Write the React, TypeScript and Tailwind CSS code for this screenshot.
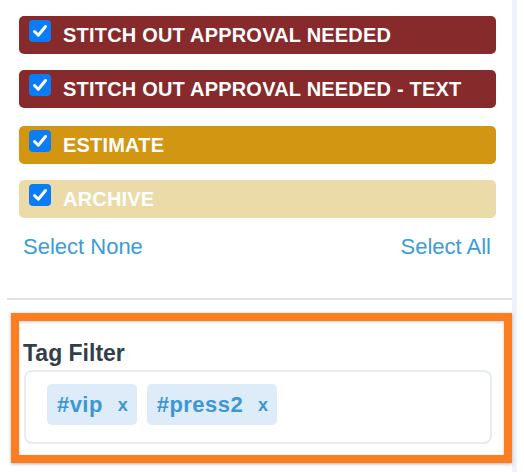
import React from 'react'

const statuses = [
  { label: 'STITCH OUT APPROVAL NEEDED', bg: 'bg-[#862a2b]', gap: 'mt-0' },
  { label: 'STITCH OUT APPROVAL NEEDED - TEXT', bg: 'bg-[#862a2b]', gap: 'mt-[16px]' },
  { label: 'ESTIMATE', bg: 'bg-[#d39613]', gap: 'mt-[18px]' },
  { label: 'ARCHIVE', bg: 'bg-[#ebdba8]', gap: 'mt-[16px]' },
]

const tags = ['#vip', '#press2']

function CheckBox() {
  return (
    <span className="mt-[4px] flex h-[22px] w-[22px] shrink-0 items-center justify-center self-start rounded-[4px] bg-[#0a7cf5]">
      <svg width="22" height="22" viewBox="0 0 22 22" fill="none">
        <path d="M5.5 11.5 L9.3 15.2 L16.5 6.5" stroke="#fff" strokeWidth="3" strokeLinecap="round" strokeLinejoin="round" />
      </svg>
    </span>
  )
}

function StatusRow({ label, bg, gap }: { label: string; bg: string; gap: string }) {
  return (
    <div className={`flex h-[38px] items-center rounded-[5px] pl-[10px] ${bg} ${gap}`}>
      <CheckBox />
      <span className="ml-[12px] text-[20px] font-bold leading-none tracking-[0.01em] text-white">{label}</span>
    </div>
  )
}

function TagChip({ tag }: { tag: string }) {
  return (
    <div className="flex h-[41px] items-center rounded-[5px] bg-[#ddecf8] pl-[10px] pr-[9px] text-[#3c97d4]">
      <span className="text-[22px] font-bold leading-none tracking-[0.02em]">{tag}</span>
      <span className="ml-[15px] text-[18px] font-bold leading-none">x</span>
    </div>
  )
}

export default function App() {
  return (
    <div className="flex h-[472px] w-[524px] overflow-hidden bg-white font-['Liberation_Sans',Arial,sans-serif]">
      <div className="w-[512px] shrink-0">
        <div className="ml-[19px] flex w-[477px] flex-col pt-[16px]">
          {statuses.map((s) => (
            <StatusRow key={s.label} label={s.label} bg={s.bg} gap={s.gap} />
          ))}
        </div>

        <div className="mt-[16px] flex justify-between pl-[23px] pr-[21px] text-[22px] leading-[26px] text-[#3d9bd8]">
          <span>Select None</span>
          <span>Select All</span>
        </div>

        <div className="ml-[7px] mt-[38px] h-[2px] w-[505px] bg-[#dde2e6]" />

        <div className="relative ml-[11px] mt-[13px] w-[501px] border-[8px] border-[#fd7e21] shadow-[0_1px_3px_rgba(0,0,0,0.3),inset_0_1px_3px_rgba(0,0,0,0.2)]">
          <div className="px-[4px] pb-[11px] pt-[18px]">
            <div className="text-[23px] font-bold leading-[28px] text-[#333e48]">Tag Filter</div>
            <div className="ml-[1px] mt-[3px] flex h-[74px] w-[468px] gap-[10px] rounded-[8px] border-2 border-[#e6ecf1] pl-[21px] pt-[12px]">
              {tags.map((t) => (
                <TagChip key={t} tag={t} />
              ))}
            </div>
          </div>
        </div>
      </div>
      <div className="h-full w-[5px] shrink-0 bg-[#eff3f9]" />
    </div>
  )
}
